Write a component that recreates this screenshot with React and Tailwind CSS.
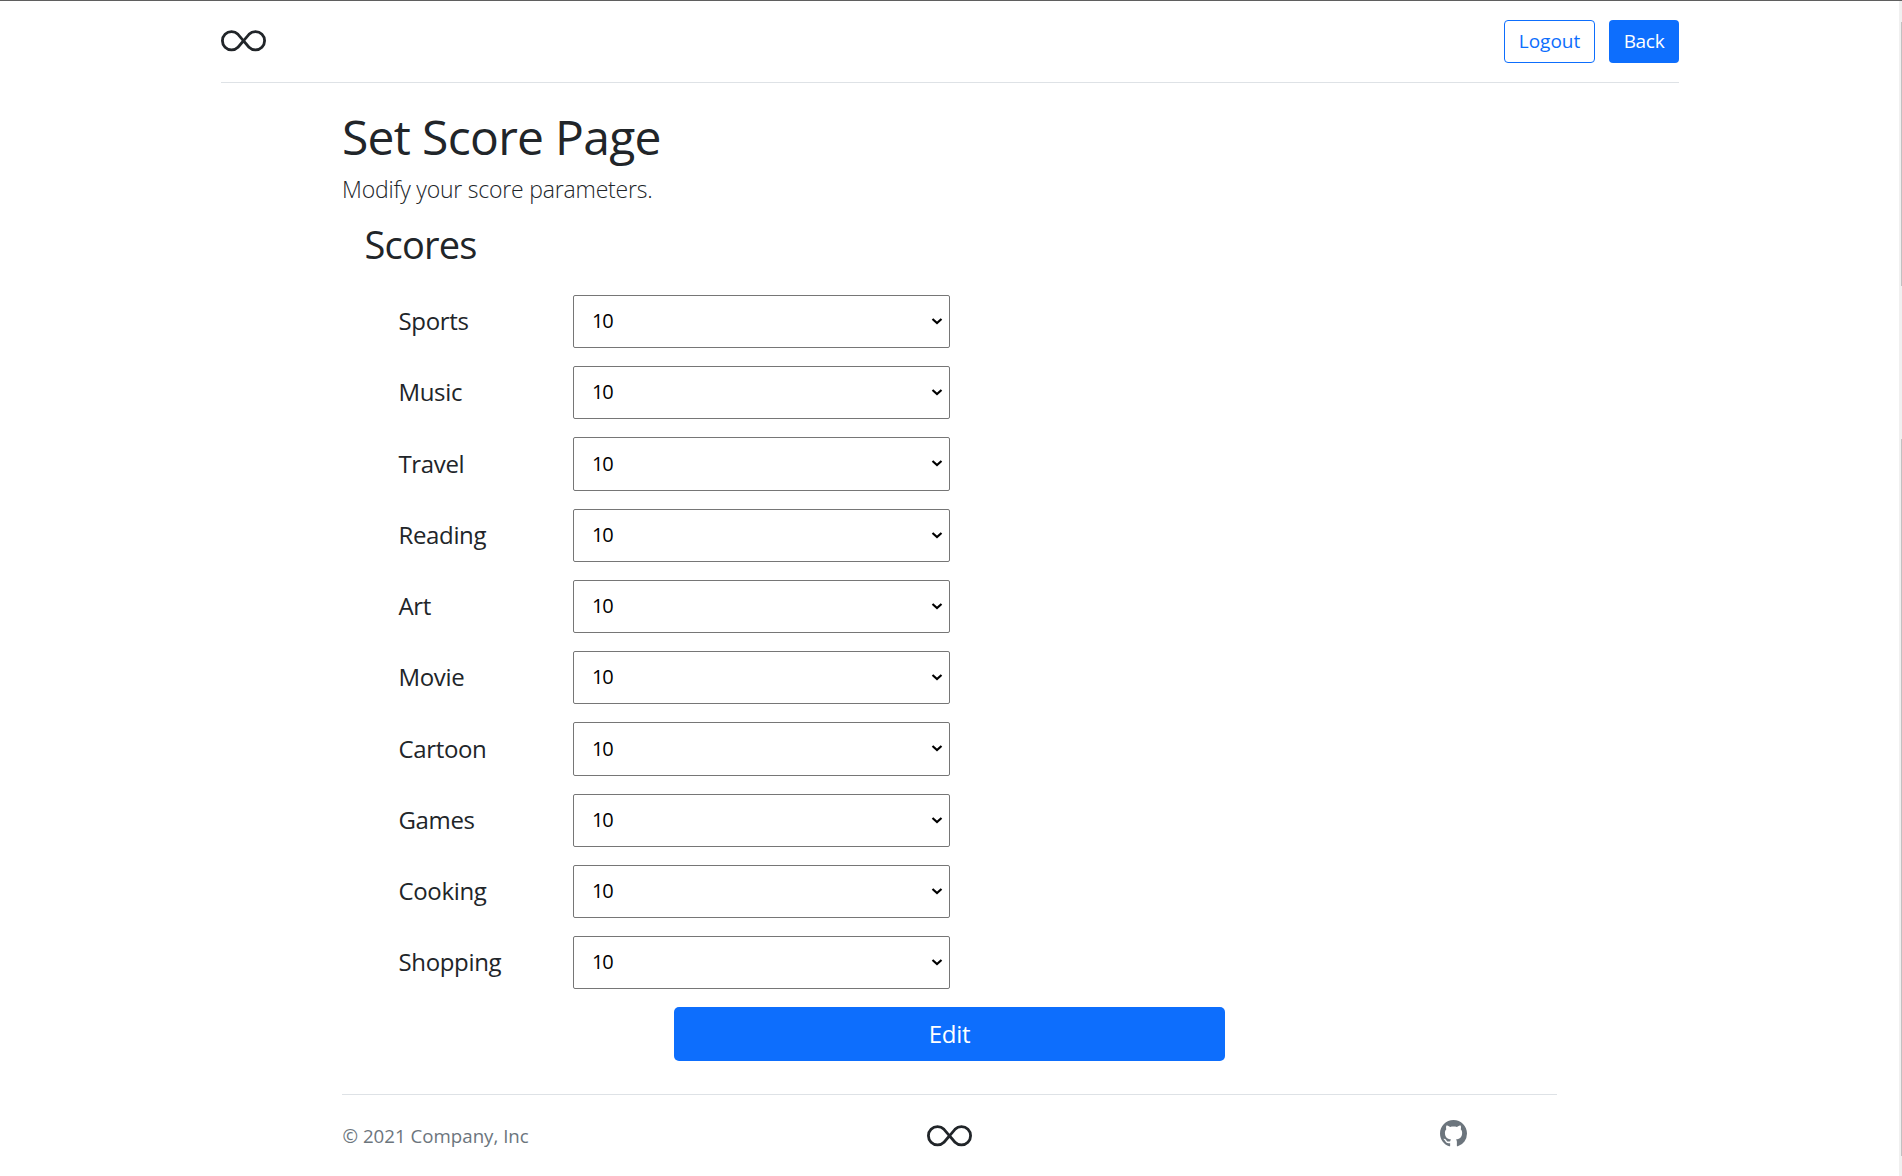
import { BsInfinity, BsGithub } from "react-icons/bs";

const categories = ["Sports", "Music", "Travel", "Reading", "Art", "Movie", "Cartoon", "Games", "Cooking", "Shopping"];
const scores = [10, 9, 8, 7, 6, 5, 4, 3, 2, 1];

function Chevron() {
  return (
    <svg className="pointer-events-none absolute right-[7px] top-[22px] h-[9px] w-[12px]" viewBox="0 0 12 9" fill="none" stroke="black" strokeWidth="2.2">
      <path d="M1.5 2 L6 6 L10.5 2" />
    </svg>
  );
}

function ScoreRow({ label }) {
  return (
    <div className="flex h-[53.25px] items-center">
      <label className="w-[175px] pb-[1px] pl-[0.5px] text-[24px] leading-[36px] tracking-[-0.35px]">{label}</label>
      <div className="relative h-full w-[377px]">
        <select className="h-full w-full appearance-none rounded-[2px] border border-[#767676] bg-white pb-px pl-[18px] text-[20px] tracking-[-1.2px] text-black">
          {scores.map((s) => (
            <option key={s}>{s}</option>
          ))}
        </select>
        <Chevron />
      </div>
    </div>
  );
}

function Scrollbar() {
  return (
    <div className="flex w-[3px] shrink-0 flex-col items-end bg-[#f0f0f0]">
      <div className="mt-[21px] h-[264px] w-px bg-[#c1c1c1]" />
      <div className="mt-[153px] h-[717px] w-px bg-[#c1c1c1]" />
    </div>
  );
}

export default function App() {
  return (
    <div className="flex h-[1176px] overflow-hidden border-t border-[#5f5f5f] bg-white font-['Open_Sans',sans-serif] text-[#212529]">
      <div className="flex-1 pl-[221px] pr-[220px]">
        <header className="flex h-[82px] items-center justify-between border-b border-[#dee2e6]">
          <BsInfinity className="h-[45px] w-[45px]" />
          <div className="flex gap-[14px]">
            <button className="h-[43px] w-[91px] rounded-[4px] border border-[#0d6efd] text-[19px] text-[#0d6efd]">Logout</button>
            <button className="h-[43px] w-[70px] rounded-[4px] bg-[#0d6efd] text-[19px] tracking-[-0.3px] text-white">Back</button>
          </div>
        </header>
        <main className="ml-[121px] mr-[122px] pt-[24px]">
          <h1 className="text-[48px] leading-[60px] tracking-[-0.7px]">Set Score Page</h1>
          <p className="mt-[5px] text-[23px] font-light leading-[34px] tracking-[-0.2px]">Modify your score parameters.</p>
          <h2 className="ml-[22.5px] mt-[15px] text-[38px] leading-[46px] tracking-[-0.8px]">Scores</h2>
          <div className="ml-[56px] mt-[27.9px] flex flex-col gap-[18px]">
            {categories.map((c) => (
              <ScoreRow key={c} label={c} />
            ))}
          </div>
          <button className="ml-[332px] mt-[17.6px] block h-[54px] w-[551px] rounded-[5px] bg-[#0d6efd] text-[24px] tracking-[-0.3px] text-white">Edit</button>
        </main>
        <footer className="ml-[121px] mr-[122px] mt-[33px] flex h-[83px] items-center border-t border-[#dee2e6]">
          <span className="w-[585px] pl-[0.5px] text-[18.7px] text-[#6c757d]">© 2021 Company, Inc</span>
          <BsInfinity className="mt-[2px] h-[45px] w-[45px]" />
          <BsGithub className="mb-[5px] ml-[468px] h-[27px] w-[27px] text-[#6c757d]" />
        </footer>
      </div>
      <Scrollbar />
    </div>
  );
}
